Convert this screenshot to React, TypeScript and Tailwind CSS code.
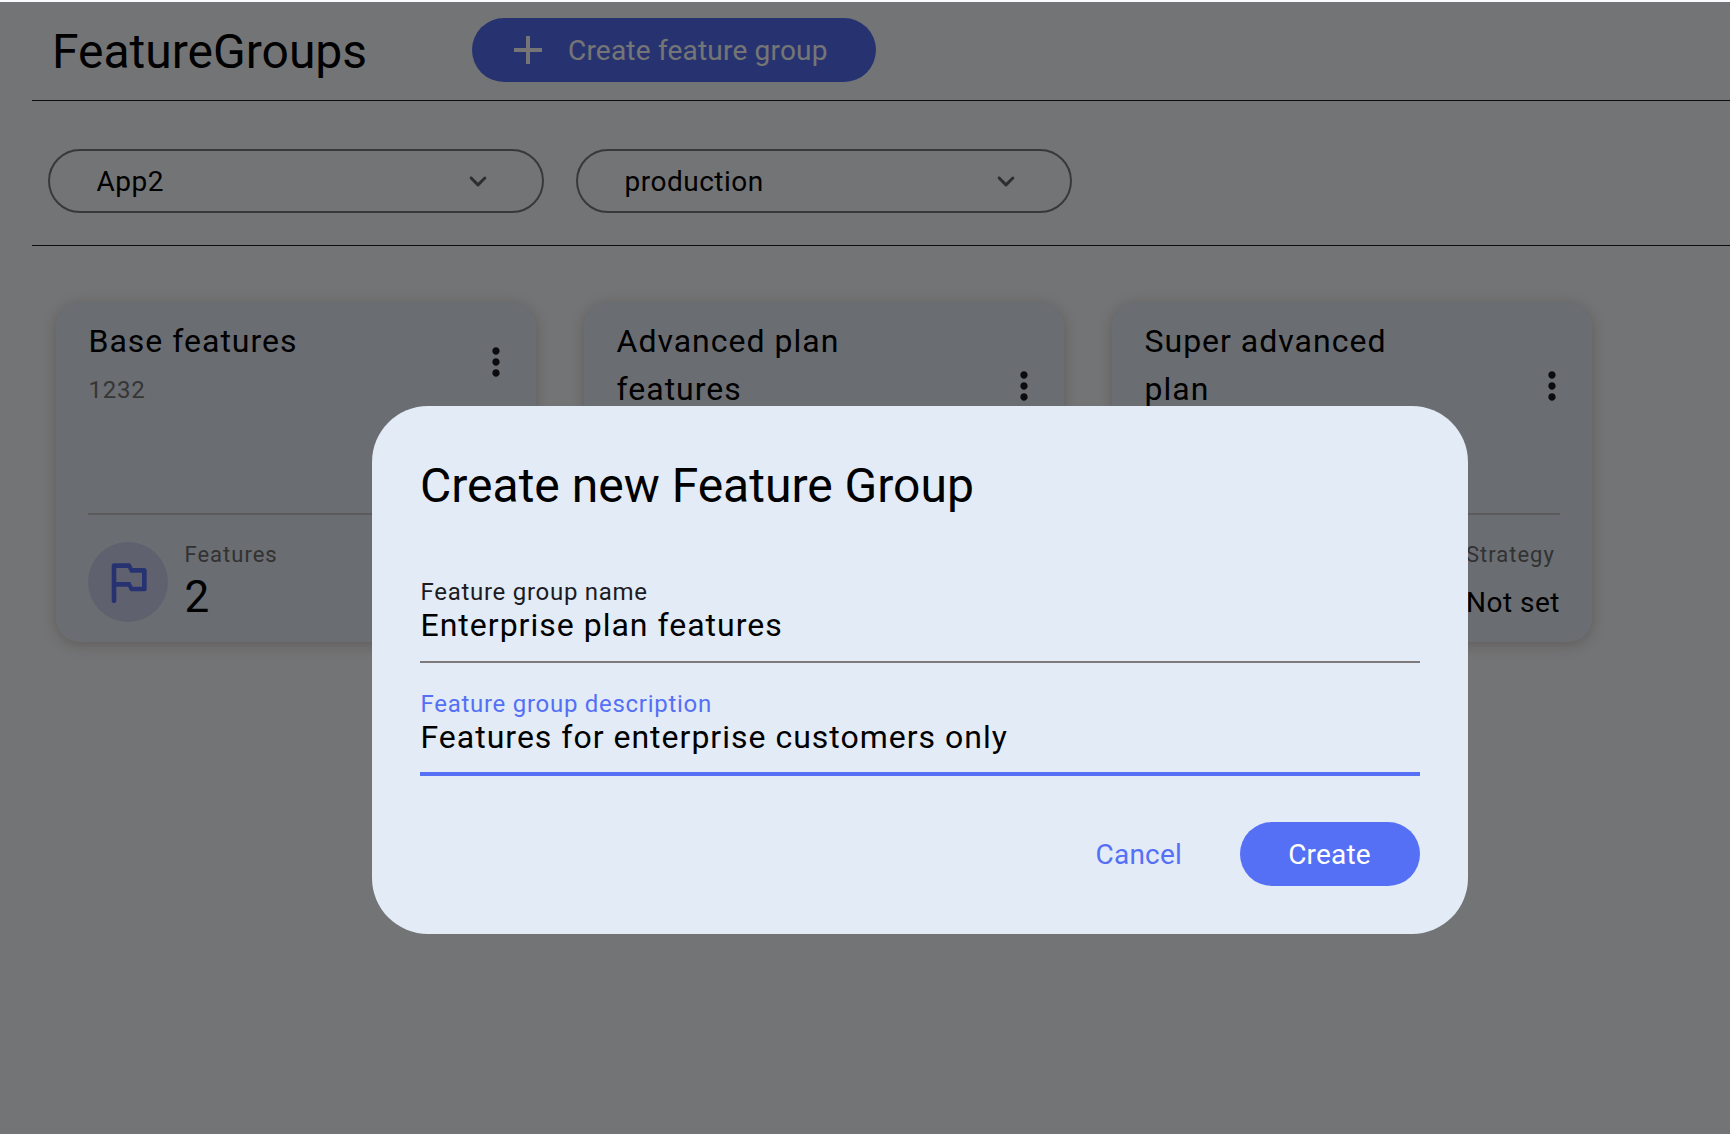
const font = "font-['Roboto',sans-serif]";

function ChevronIcon() {
  return (
    <svg viewBox="0 0 24 24" className="size-9 text-black/60" fill="currentColor">
      <path d="M8.12 9.29 12 13.17l3.88-3.88a.996.996 0 1 1 1.41 1.41l-4.59 4.59a.996.996 0 0 1-1.41 0L6.7 10.7a.996.996 0 0 1 0-1.41c.39-.38 1.03-.39 1.42 0z" />
    </svg>
  );
}

function MoreIcon() {
  return (
    <svg viewBox="0 0 24 24" className="size-11 shrink-0 text-[#1c1b1f]" fill="currentColor">
      <path d="M12 8c1.1 0 2-.9 2-2s-.9-2-2-2-2 .9-2 2 .9 2 2 2zm0 2c-1.1 0-2 .9-2 2s.9 2 2 2 2-.9 2-2-.9-2-2-2zm0 6c-1.1 0-2 .9-2 2s.9 2 2 2 2-.9 2-2-.9-2-2-2z" />
    </svg>
  );
}

function FlagIcon() {
  return (
    <svg viewBox="0 0 24 24" className="size-14 text-[#5570f5]" fill="currentColor">
      <path d="m14 6-.72-1.45c-.17-.34-.52-.55-.9-.55H6c-.55 0-1 .45-1 1v15c0 .55.45 1 1 1s1-.45 1-1v-6h5l.72 1.45c.17.34.52.55.89.55H19c.55 0 1-.45 1-1V7c0-.55-.45-1-1-1h-5zm4 8h-4l-1-2H7V6h5l1 2h5v6z" />
    </svg>
  );
}

function Dropdown({ value }: { value: string }) {
  return (
    <button className="flex h-16 w-[496px] items-center justify-between rounded-full border-2 border-[#7b7b7a] px-[46px] text-[28px] tracking-[0.5px] text-black">
      <span className="pt-px pl-[0.5px]">{value}</span>
      <ChevronIcon />
    </button>
  );
}

type Group = { title: string; description?: string; count: number; strategy: string };

const groups: Group[] = [
  { title: "Base features", description: "1232", count: 2, strategy: "Not set" },
  { title: "Advanced plan features", count: 3, strategy: "Not set" },
  { title: "Super advanced plan", count: 4, strategy: "Not set" },
];

function GroupCard({ group }: { group: Group }) {
  return (
    <article className="flex h-[340px] w-[480px] flex-col rounded-3xl bg-[#e6eef8] px-8 shadow-[0_3px_14px_0_rgba(80,50,20,0.24)]">
      <div className="mt-[15px] flex items-center justify-between">
        <div className="w-[300px]">
          <h2 className="pl-[0.5px] text-[32px] leading-[48px] tracking-[1px] text-black">{group.title}</h2>
          <p className="h-[43px] pl-[0.5px] text-2xl leading-[50px] tracking-[0.8px] text-[#767676]">
            {group.description}
          </p>
        </div>
        <div className="-mr-3.5 pb-0.5">
          <MoreIcon />
        </div>
      </div>
      <div className="mt-auto mb-5 border-t-2 border-[#c8c6c6] pt-[27px]">
        <div className="flex h-20 items-start justify-between">
          <div className="flex gap-4">
            <div className="flex size-20 items-center justify-center rounded-full bg-[#d0d3f1]">
              <FlagIcon />
            </div>
            <div className="pl-[0.5px]">
              <p className="text-[22px] leading-[25px] tracking-[1px] text-[#6d6d6d]">Features</p>
              <p className="text-[44px] leading-[60px] text-black">{group.count}</p>
            </div>
          </div>
          <div>
            <p className="text-[22px] leading-[25px] tracking-[1px] text-[#6d6d6d]">Strategy</p>
            <p className="pt-[10px] text-[28px] leading-[51px] tracking-[0.5px] text-black">{group.strategy}</p>
          </div>
        </div>
      </div>
    </article>
  );
}

function CreateDialog() {
  return (
    <div className="flex h-[528px] w-[1096px] flex-col rounded-[56px] bg-[#e3ebf6] px-12 pt-12">
      <h2 className="text-5xl leading-[64px] text-black">Create new Feature Group</h2>
      <label className="mt-[59px] flex flex-col border-b-2 border-[#7e7a7c]">
        <span className="pl-[0.5px] text-2xl leading-[30px] tracking-[0.72px] text-[#1c1b1f]">Feature group name</span>
        <span className="pb-[18px] pl-[0.5px] text-[32px] leading-[36px] tracking-[1px] text-black">
          Enterprise plan features
        </span>
      </label>
      <label className="mt-[26px] flex flex-col border-b-4 border-[#5570f5]">
        <span className="pl-[0.5px] text-2xl leading-[30px] tracking-[0.72px] text-[#5570f5]">
          Feature group description
        </span>
        <span className="pb-[17px] pl-[0.5px] text-[32px] leading-[36px] tracking-[1px] text-black">
          Features for enterprise customers only
        </span>
      </label>
      <div className="mt-[46px] flex items-center justify-end gap-[58px] text-[28px] leading-[40px] tracking-[0.2px]">
        <button className="pt-px text-[#5570f5]">Cancel</button>
        <button className="flex h-16 w-[180px] items-center justify-center rounded-full bg-[#5570f5] pt-px pr-px text-white">
          Create
        </button>
      </div>
    </div>
  );
}

export default function App() {
  return (
    <div className={`relative h-[1134px] w-full overflow-hidden bg-[#fafcff] ${font}`}>
      <header className="ml-8 flex h-[101px] items-center border-b border-[#1c1b1f] pl-5">
        <h1 className="w-[420px] pt-1 text-5xl leading-[64px] text-black">FeatureGroups</h1>
        <button className="flex h-16 w-[404px] items-center gap-4 rounded-full bg-[#5570f5] pl-8 text-[28px] tracking-[0.2px] text-white">
          <svg viewBox="0 0 24 24" className="size-12" fill="currentColor">
            <path d="M19 13h-6v6h-2v-6H5v-2h6V5h2v6h6v2z" />
          </svg>
          <span className="pt-px">Create feature group</span>
        </button>
      </header>
      <section className="ml-8 flex h-[145px] items-center gap-8 border-b border-[#1c1b1f] pt-4 pl-4">
        <Dropdown value="App2" />
        <Dropdown value="production" />
      </section>
      <main className="flex gap-12 pt-14 pl-14">
        {groups.map((g) => (
          <GroupCard key={g.title} group={g} />
        ))}
      </main>
      <div className="absolute inset-x-0 top-0.5 bottom-0 bg-black/54 pt-[404px] pl-[372px]">
        <CreateDialog />
      </div>
    </div>
  );
}
